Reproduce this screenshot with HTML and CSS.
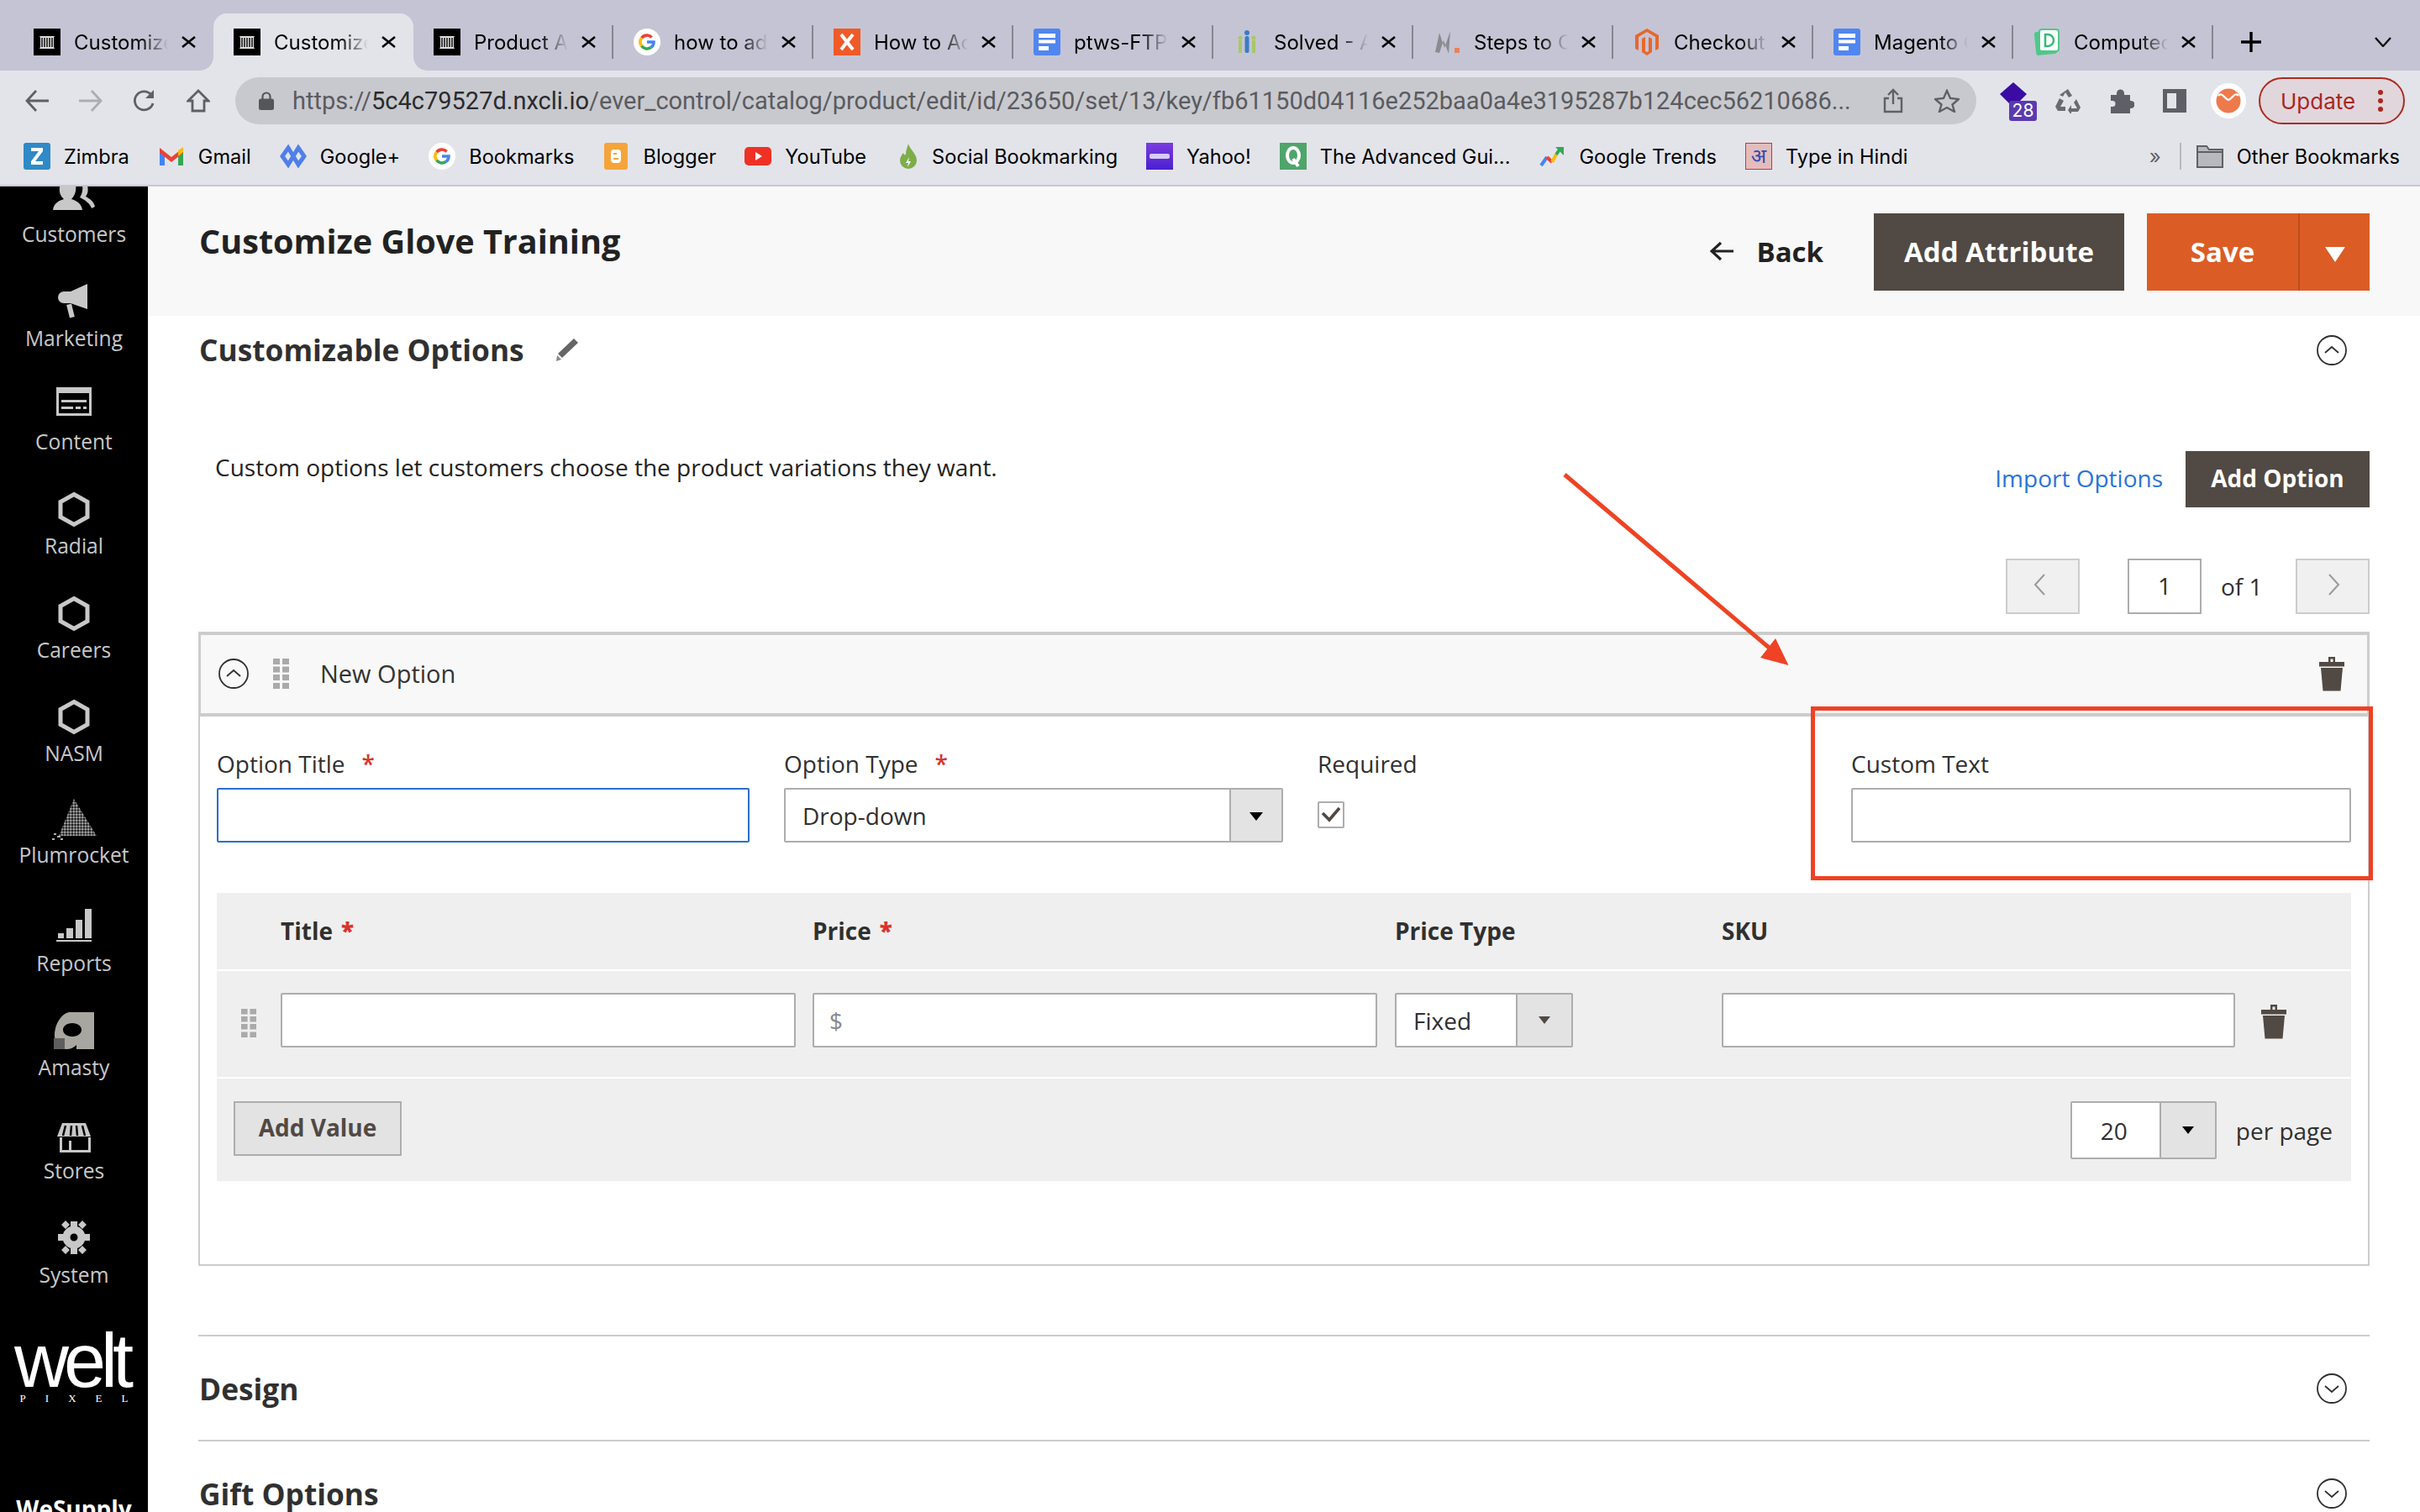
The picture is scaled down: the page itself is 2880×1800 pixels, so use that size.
FILE: index.html
```html
<!DOCTYPE html>
<html lang="en">
<head>
<meta charset="utf-8">
<title>Customize Glove Training</title>
<link rel="stylesheet" href="styles.css">
</head>
<body>
<svg class="defs" xmlns="http://www.w3.org/2000/svg">
  <symbol id="ev" viewBox="0 0 32 32"><rect width="32" height="32" fill="#000"/><path d="M7 9h18l-1 2v11l1 2H7l1-2V11z" fill="#ddd"/><path d="M10 11v11M13 11v11M16 11v11M19 11v11M22 11v11" stroke="#000" stroke-width="1.4"/></symbol>
  <symbol id="g" viewBox="0 0 32 32"><circle cx="16" cy="16" r="16" fill="#fff"/><g fill="none" stroke-width="3.6"><path d="M21.6 10.4A8 8 0 0 0 9.6 11.2" stroke="#ea4335"/><path d="M9.6 11.2A8 8 0 0 0 9.6 20.8" stroke="#fbbc05"/><path d="M9.6 20.8A8 8 0 0 0 20.6 22.6" stroke="#34a853"/><path d="M20.6 22.6A8 8 0 0 0 24 16H16" stroke="#4285f4"/></g></symbol>
  <symbol id="doc" viewBox="0 0 32 32"><rect width="32" height="32" rx="3" fill="#5086f0"/><path d="M6 6h20v5H6zM6 13.500h20v4H6zM6 21h12v5H6z" fill="#fff"/></symbol>
  <symbol id="x" viewBox="0 0 32 32"><rect width="32" height="32" fill="#f05a28"/><path d="M9 7l14 18M23 7L9 25" stroke="#fff" stroke-width="4"/></symbol>
  <symbol id="solved" viewBox="0 0 32 32"><circle cx="16" cy="5" r="3" fill="#3a7cc4"/><rect x="13.500" y="9" width="5" height="20" rx="2" fill="#3a7cc4"/><circle cx="8" cy="11" r="2.500" fill="#a8c868"/><rect x="6" y="14" width="4" height="15" fill="#a8c868"/><circle cx="24" cy="11" r="2.500" fill="#a8c868"/><rect x="22" y="14" width="4" height="15" fill="#a8c868"/></symbol>
  <symbol id="steps" viewBox="0 0 32 32"><path d="M2 28L7 5l6 18L20 3l-2 27-6-16-5 15z" fill="#8a8a92"/><rect x="25" y="23" width="6" height="6" fill="#e8825a"/></symbol>
  <symbol id="mag" viewBox="0 0 32 32"><path d="M16 0L30 8v16l-4 2V10L16 4 6 10v16l-4-2V8z" fill="#e8672b"/><path d="M14 10l-4 2v16l6 4 6-4V12l-4-2v17l-2 1-2-1z" fill="#e8672b"/></symbol>
  <symbol id="comp" viewBox="0 0 32 32"><rect x="2" y="3" width="25" height="28" rx="3" fill="#4fc88a" transform="rotate(-6 14 17)"/><rect x="7" y="1" width="23" height="26" rx="3" fill="#fff" stroke="#4fc88a" stroke-width="2"/><path d="M14 7h3a7 7 0 0 1 0 14h-3z" fill="none" stroke="#38b878" stroke-width="2.500"/></symbol>
  <symbol id="trash" viewBox="0 0 30 42"><path d="M11 1h8v6h-2.500V3.500h-3V7H11z" fill="#514943"/><rect x="0" y="7" width="30" height="5.500" fill="#514943"/><path d="M2 14h26l-2.500 27.500h-21z" fill="#514943"/></symbol>
  <symbol id="grip" viewBox="0 0 19 36"><path d="M0 0h8v7H0zM11 0h8v7h-8zM0 9.500h8v7H0zM11 9.500h8v7h-8zM0 19h8v7H0zM11 19h8v7h-8zM0 29h8v7H0zM11 29h8v7h-8z" fill="#aaa"/></symbol>
  <symbol id="up" viewBox="0 0 36 36"><circle cx="18" cy="18" r="17" fill="none" stroke="#303030" stroke-width="1.800"/><path d="M10 21l8-7 8 7" fill="none" stroke="#303030" stroke-width="1.800"/></symbol>
  <symbol id="down" viewBox="0 0 36 36"><circle cx="18" cy="18" r="17" fill="none" stroke="#303030" stroke-width="1.800"/><path d="M10 15l8 7 8-7" fill="none" stroke="#303030" stroke-width="1.800"/></symbol>
  <symbol id="hex" viewBox="0 0 60 60"><path d="M30 16.500l16 9v18l-16 9-16-9v-18z" fill="none" stroke="#c8c8c8" stroke-width="5"/></symbol>
  <symbol id="tabx" viewBox="0 0 17 14"><path d="M1 1l15 12M16 1L1 13" stroke="#000" stroke-width="2.600"/></symbol>
</svg>

<header class="chrome">
  <div class="tabstrip">
    <div class="tab"><svg class="fav"><use href="#ev"/></svg><span class="tab-title">Customize</span><svg class="tab-x"><use href="#tabx"/></svg></div>
    <div class="tab tab-active"><svg class="fav"><use href="#ev"/></svg><span class="tab-title">Customize</span><svg class="tab-x"><use href="#tabx"/></svg></div>
    <div class="tab"><svg class="fav"><use href="#ev"/></svg><span class="tab-title">Product A</span><svg class="tab-x"><use href="#tabx"/></svg><i class="tab-sep"></i></div>
    <div class="tab"><svg class="fav"><use href="#g"/></svg><span class="tab-title">how to ad</span><svg class="tab-x"><use href="#tabx"/></svg><i class="tab-sep"></i></div>
    <div class="tab"><svg class="fav"><use href="#x"/></svg><span class="tab-title">How to Ac</span><svg class="tab-x"><use href="#tabx"/></svg><i class="tab-sep"></i></div>
    <div class="tab"><svg class="fav"><use href="#doc"/></svg><span class="tab-title">ptws-FTP</span><svg class="tab-x"><use href="#tabx"/></svg><i class="tab-sep"></i></div>
    <div class="tab"><svg class="fav"><use href="#solved"/></svg><span class="tab-title">Solved - A</span><svg class="tab-x"><use href="#tabx"/></svg><i class="tab-sep"></i></div>
    <div class="tab"><svg class="fav"><use href="#steps"/></svg><span class="tab-title">Steps to C</span><svg class="tab-x"><use href="#tabx"/></svg><i class="tab-sep"></i></div>
    <div class="tab"><svg class="fav"><use href="#mag"/></svg><span class="tab-title">Checkout</span><svg class="tab-x"><use href="#tabx"/></svg><i class="tab-sep"></i></div>
    <div class="tab"><svg class="fav"><use href="#doc"/></svg><span class="tab-title">Magento C</span><svg class="tab-x"><use href="#tabx"/></svg><i class="tab-sep"></i></div>
    <div class="tab"><svg class="fav"><use href="#comp"/></svg><span class="tab-title">Computec</span><svg class="tab-x"><use href="#tabx"/></svg><i class="tab-sep"></i></div>
    <svg class="tab-new" viewBox="0 0 24 24"><path d="M12 0v24M0 12h24" stroke="#000" stroke-width="3.400"/></svg>
    <svg class="tab-menu" viewBox="0 0 20 12"><path d="M1 1l9 10 9-10" fill="none" stroke="#111" stroke-width="2.400"/></svg>
  </div>

  <div class="toolbar">
    <div class="nav-icons">
      <svg class="nav-icon" viewBox="0 0 28 28"><path d="M28 14H3M13 2L2 14l11 12" fill="none" stroke="#5f6067" stroke-width="2.800"/></svg>
      <svg class="nav-icon" viewBox="0 0 28 28"><path d="M0 14h25M15 2l11 12-11 12" fill="none" stroke="#acadb3" stroke-width="2.800"/></svg>
      <svg class="nav-icon" viewBox="0 0 28 28"><path d="M24 17a11 11 0 1 1-2-10" fill="none" stroke="#5f6067" stroke-width="2.800"/><path d="M25 1v10H15z" fill="#5f6067"/></svg>
      <svg class="nav-icon" viewBox="0 0 28 28"><path d="M14 2L2 14h5v12h14V14h5z" fill="none" stroke="#5f6067" stroke-width="2.800"/></svg>
    </div>
    <div class="urlbar">
      <svg class="lock" viewBox="0 0 18 22"><path d="M4.500 9V6a4.500 4.500 0 0 1 9 0v3" fill="none" stroke="#55565a" stroke-width="2.200"/><rect y="8.500" width="18" height="13.500" rx="2.500" fill="#55565a"/></svg>
      <span class="url">https://<b class="url-host">5c4c79527d.nxcli.io</b>/ever_control/catalog/product/edit/id/23650/set/13/key/fb61150d04116e252baa0a4e3195287b124cec56210686...</span>
      <svg class="share" viewBox="0 0 24 30"><path d="M12 19V2M6 8l6-6 6 6M7 12H2v16h20V12h-5" fill="none" stroke="#5f6067" stroke-width="2.400"/></svg>
      <svg class="star" viewBox="0 0 30 28"><path d="M15 2l4 9 10 1-7.500 6.500L24 27l-9-5-9 5 2.500-8.500L1 12l10-1z" fill="none" stroke="#5f6067" stroke-width="2.400"/></svg>
    </div>
    <div class="ext-badge">
      <svg class="ext-dia" viewBox="0 0 32 30"><path d="M16 0l16 14-16 16L0 14z" fill="#3a0ca3"/></svg>
      <span class="ext-count">28</span>
    </div>
    <svg class="tool tool-recycle" viewBox="0 0 30 30"><path d="M15 1l5 8-4 2-4-6-3 5-4-2zM25 13l5 10-3 5h-8v4l-4-6 4-6v4h7l-4-7zM5 12l-5 10 3 5h9v-5H6l4-7z" fill="#6a6b72"/></svg>
    <svg class="tool tool-puzzle" viewBox="0 0 30 30"><path d="M2 8h7V6a4.500 4.500 0 0 1 9 0v2h7v7h1a4.500 4.500 0 0 1 0 9h-1v6H2v-8h2a3.500 3.500 0 0 0 0-7H2z" fill="#5f6067"/></svg>
    <svg class="tool tool-panel" viewBox="0 0 28 28"><path d="M0 0h28v28H0z" fill="#5f6067"/><path d="M5 5h11v18H5z" fill="#e3e4ea"/></svg>
    <svg class="avatar" viewBox="0 0 42 42"><circle cx="21" cy="21" r="21" fill="#fff"/><circle cx="21" cy="21" r="14.500" fill="#ee7a4b"/><path d="M9 15c4-5 7 3 12 5 5-2 8-10 12-5" fill="none" stroke="#fff" stroke-width="2.200"/></svg>
    <div class="update"><span>Update</span><svg class="dots" viewBox="0 0 6 26"><circle cx="3" cy="3" r="3"/><circle cx="3" cy="13" r="3"/><circle cx="3" cy="23" r="3"/></svg></div>
  </div>

  <div class="bookmarks">
    <div class="bm"><svg class="fav" viewBox="0 0 32 32"><rect width="32" height="32" rx="3" fill="#2f8ac6"/><path d="M9 6h14v4L14 22h9v4H9v-4l9-12H9z" fill="#fff"/></svg><span>Zimbra</span></div>
    <div class="bm"><svg class="fav" viewBox="0 0 32 32"><path d="M2 6v21h6V13z" fill="#4285f4"/><path d="M30 6v21h-6V13z" fill="#34a853"/><path d="M2 6l14 11L30 6v6L16 23 2 12z" fill="#ea4335"/><path d="M24 9l6-4v6l-6 5z" fill="#fbbc05"/></svg><span>Gmail</span></div>
    <div class="bm"><svg class="fav" viewBox="0 0 32 32"><path d="M10 6l6 10-6 10-7-10zM22 6l7 10-7 10-6-10z" fill="none" stroke="#4f7fe8" stroke-width="5"/></svg><span>Google+</span></div>
    <div class="bm"><svg class="fav"><use href="#g"/></svg><span>Bookmarks</span></div>
    <div class="bm"><svg class="fav" viewBox="0 0 32 32"><rect x="2" width="28" height="32" rx="3" fill="#f5a43a"/><rect x="10" y="8" width="12" height="16" rx="4" fill="#fff"/><path d="M13 13h4M13 19h6" stroke="#f5a43a" stroke-width="2"/></svg><span>Blogger</span></div>
    <div class="bm"><svg class="fav" viewBox="0 0 32 32"><rect y="5" width="32" height="22" rx="5" fill="#ee3124"/><path d="M13 11l8 5-8 5z" fill="#fff"/></svg><span>YouTube</span></div>
    <div class="bm bm-social"><svg class="fav-flame" viewBox="0 0 24 32"><path d="M12 1c1 6 10 12 10 20a10 10 0 0 1-20 0c0-4 2-6 4-9 1 3 3 3 3 1 0-4 2-8 3-12z" fill="#7cae4a"/><path d="M13 17l-4 7h3l-1 5 4-7h-3z" fill="#fff"/></svg><span>Social Bookmarking</span></div>
    <div class="bm"><svg class="fav" viewBox="0 0 32 32"><defs><linearGradient id="yh" x1="0" y1="0" x2="0" y2="1"><stop offset="0" stop-color="#7a3de0"/><stop offset="1" stop-color="#4a20d0"/></linearGradient></defs><rect width="32" height="32" fill="url(#yh)"/><rect x="4" y="13" width="24" height="6" rx="2" fill="#d8ccf5"/></svg><span>Yahoo!</span></div>
    <div class="bm"><svg class="fav" viewBox="0 0 32 32"><rect width="32" height="32" fill="#4fa56a"/><ellipse cx="16" cy="15" rx="7" ry="9" fill="none" stroke="#fff" stroke-width="4"/><path d="M16 19l6 9" stroke="#fff" stroke-width="4"/></svg><span>The Advanced Gui...</span></div>
    <div class="bm"><svg class="fav" viewBox="0 0 32 32"><path d="M3 27l7-10" stroke="#4285f4" stroke-width="4"/><path d="M10 17l6 6" stroke="#ea4335" stroke-width="4"/><path d="M16 23l5-9" stroke="#fbbc05" stroke-width="4"/><path d="M21 14l4-6" stroke="#34a853" stroke-width="4"/><path d="M20 5h10v10z" fill="#34a853"/></svg><span>Google Trends</span></div>
    <div class="bm"><span class="hindi-ico">अ</span><span>Type in Hindi</span></div>
    <span class="bm-more">»</span>
    <i class="bm-sep"></i>
    <div class="bm bm-other"><svg class="fav" viewBox="0 0 32 32"><path d="M1 4h11l3 4h16v21H1z" fill="#b8b9be" stroke="#5f6067" stroke-width="2"/><path d="M1 11h30" stroke="#5f6067" stroke-width="2"/></svg><span>Other Bookmarks</span></div>
  </div>
</header>

<div class="app">
  <nav class="sidebar">
    <div class="nav-item"><svg class="nav-ico" viewBox="0 0 60 60"><path d="M5 49c1-9 8-11 13-13-6-5-6-12-4-18h18c1 6 0 13-5 18 6 2 12 5 13 13z" fill="#c8c8c8"/><path d="M40 20c1 6-1 11-3 14 6 3 12 7 14 13l4-2c-1-6-7-10-11-12 3-4 3-9 2-13z" fill="#c8c8c8"/></svg><span>Customers</span></div>
    <div class="nav-item"><svg class="nav-ico" viewBox="0 0 60 60"><path d="M46 18v30L26 41H18a6 6 0 0 1 0-14h8z" fill="#c8c8c8" transform="translate(0 -5)"/><rect x="23" y="37" width="6" height="16" fill="#c8c8c8" transform="rotate(-14 26 45)"/></svg><span>Marketing</span></div>
    <div class="nav-item"><svg class="nav-ico" viewBox="0 0 60 60"><path d="M9 13h42v34H9zM12 20v24h36V20z" fill="#c8c8c8" fill-rule="evenodd"/><path d="M15 28h30v3H15zM15 36h14v3H15zM32 36h6v3h-6zM41 36h4v3h-4z" fill="#c8c8c8"/></svg><span>Content</span></div>
    <div class="nav-item"><svg class="nav-ico"><use href="#hex"/></svg><span>Radial</span></div>
    <div class="nav-item"><svg class="nav-ico"><use href="#hex"/></svg><span>Careers</span></div>
    <div class="nav-item"><svg class="nav-ico"><use href="#hex"/></svg><span>NASM</span></div>
    <div class="nav-item nav-plum"><svg class="nav-ico" viewBox="0 0 60 60"><defs><pattern id="dots" width="3.500" height="3.500" patternUnits="userSpaceOnUse"><circle cx="1.750" cy="1.750" r="1.500" fill="#b0b0b0"/></pattern></defs><path d="M30 11L57 55H12z" fill="url(#dots)"/><path d="M4 59h3M10 56h4M14 59h3M6 53h3" stroke="#b0b0b0" stroke-width="2"/></svg><span>Plumrocket</span></div>
    <div class="nav-item nav-reports"><svg class="nav-ico" viewBox="0 0 60 60"><path d="M11 42h7v6h-7zM21 36h8v12h-8zM32 26h8v22h-8zM43 13h8v35h-8z" fill="#c8c8c8"/><rect x="9" y="50" width="42" height="2" fill="#c8c8c8"/></svg><span>Reports</span></div>
    <div class="nav-item"><svg class="nav-ico" viewBox="0 0 60 60"><path d="M25 12h29v44H33v-5c-3 3-7 5-12 5-10 0-14-8-14-16 0-18 12-28 18-28zm3 13c-7 0-11 4-11 8s4 8 11 8 11-4 11-8-4-8-11-8z" fill="#a8a6a0" fill-rule="evenodd"/><rect x="6" y="43" width="13" height="13" fill="#5e5e5e"/></svg><span>Amasty</span></div>
    <div class="nav-item"><svg class="nav-ico" viewBox="0 0 60 60"><path d="M16 21h28l6 16H10z" fill="#c8c8c8"/><path d="M20 24l-3 12M27 24l-1 12M33 24l1 12M40 24l3 12" stroke="#000" stroke-width="2.500"/><path d="M13 38h3v15h8V42h3v11h20V38h3v18H13z" fill="#c8c8c8"/></svg><span>Stores</span></div>
    <div class="nav-item"><svg class="nav-ico" viewBox="0 0 60 60"><circle cx="30" cy="33" r="9" fill="none" stroke="#c8c8c8" stroke-width="9"/><path d="M26 14h8v6h-8zM26 46h8v7h-8zM11 29h6v8h-6zM43 29h6v8h-6zM15 18l5-5 5 5-5 5zM35 48l5-5 5 5-5 5zM35 18l5-5 5 5-5 5zM15 48l5-5 5 5-5 5z" fill="#c8c8c8"/></svg><span>System</span></div>
    <div class="welt"><span class="welt-word">welt</span><span class="welt-pixel">PIXEL</span></div>
    <div class="wesupply">WeSupply</div>
  </nav>

  <main class="content">
    <div class="page-head">
      <h1 class="page-title">Customize Glove Training</h1>
      <div class="page-actions">
        <a class="back"><svg class="back-ico" viewBox="0 0 28 24"><path d="M28 12H3M13 2L2 12l11 10" fill="none" stroke="#222" stroke-width="3.200"/></svg>Back</a>
        <a class="btn-dark btn-attr">Add Attribute</a>
        <div class="btn-save"><span class="save-label">Save</span><span class="save-arrow"><i class="tri-white"></i></span></div>
      </div>
    </div>

    <section class="panel">
      <div class="panel-head">
        <h2 class="panel-title">Customizable Options</h2>
        <svg class="pencil" viewBox="0 0 28 28"><path d="M22 1l5 5L8 24l-5-5z" fill="#666"/><path d="M2 21l5 5-6 2z" fill="#888"/></svg>
        <svg class="circ circ-right"><use href="#up"/></svg>
      </div>
      <div class="intro-row">
        <p class="intro">Custom options let customers choose the product variations they want.</p>
        <div class="intro-actions"><a class="link">Import Options</a><a class="btn-dark btn-option">Add Option</a></div>
      </div>
      <div class="pager">
        <span class="page-btn page-prev"><svg viewBox="0 0 14 26"><path d="M13 1L2 13l11 12" fill="none" stroke="#999" stroke-width="2"/></svg></span>
        <span class="page-num">1</span>
        <span class="page-of">of 1</span>
        <span class="page-btn page-next"><svg viewBox="0 0 14 26"><path d="M1 1l11 12L1 25" fill="none" stroke="#999" stroke-width="2"/></svg></span>
      </div>

      <div class="option">
        <div class="option-head">
          <svg class="circ"><use href="#up"/></svg>
          <svg class="grip"><use href="#grip"/></svg>
          <span class="option-name">New Option</span>
          <svg class="trash trash-head"><use href="#trash"/></svg>
        </div>
        <div class="option-body">
          <div class="fields">
            <div class="field"><label class="flabel">Option Title<b class="req">*</b></label><input class="input input-focus" type="text"></div>
            <div class="field"><label class="flabel">Option Type<b class="req">*</b></label>
              <div class="select"><span class="select-val">Drop-down</span><span class="select-arrow select-arrow-main"><i class="tri tri-black tri-big"></i></span></div>
            </div>
            <div class="field"><label class="flabel">Required</label>
              <span class="checkbox"><svg viewBox="0 0 28 28"><path d="M4 12l8 8L24 6" fill="none" stroke="#514943" stroke-width="3.600"/></svg></span>
            </div>
            <div class="field"><label class="flabel">Custom Text</label><input class="input" type="text"></div>
          </div>

          <div class="vtable">
            <div class="vrow vrow-head">
              <span></span>
              <span class="th">Title<b class="req-t">*</b></span>
              <span class="th">Price<b class="req-t">*</b></span>
              <span class="th">Price Type</span>
              <span class="th">SKU</span>
              <span></span>
            </div>
            <div class="vrow vrow-body">
              <svg class="grip grip-row"><use href="#grip"/></svg>
              <input class="input w-title" type="text">
              <div class="price w-price"><span class="dollar">$</span></div>
              <div class="select w-type"><span class="select-val">Fixed</span><span class="select-arrow"><i class="tri tri-grey"></i></span></div>
              <input class="input w-sku" type="text">
              <svg class="trash trash-row"><use href="#trash"/></svg>
            </div>
            <div class="vfoot">
              <a class="btn-light">Add Value</a>
              <div class="perpage">
                <div class="select select-pp"><span class="select-val">20</span><span class="select-arrow"><i class="tri tri-black"></i></span></div>
                <span class="pp-text">per page</span>
              </div>
            </div>
          </div>
        </div>
      </div>

      <div class="accordions">
        <div class="acc"><h2 class="panel-title">Design</h2><svg class="circ"><use href="#down"/></svg></div>
        <div class="acc"><h2 class="panel-title">Gift Options</h2><svg class="circ"><use href="#down"/></svg></div>
      </div>
    </section>
  </main>
</div>

<div class="callout"></div>
<svg class="arrow-note" viewBox="0 0 2880 1800"><path d="M1862 565L2110 775" stroke="#ee4324" stroke-width="5" fill="none"/><path d="M2128.500 792L2095 783L2113 760z" fill="#ee4324"/></svg>
</body>
</html>
```
FILE: styles.css
```css
* { box-sizing: border-box; }
html, body { margin: 0; padding: 0; }
body { position: relative; width: 2880px; height: 1800px; overflow: hidden; background: #fff; font-family: "Open Sans", sans-serif; color: #303030; }
.defs { display: none; }

/* browser chrome */
.chrome { font-family: Inter, "Liberation Sans", sans-serif; color: #000; height: 222px; background: #e3e4ea; border-bottom: 2px solid #c8c8cf; }
.tabstrip { height: 84px; background: #c5c4d4; display: flex; padding: 16px 0 0 16px; }
.tab { position: relative; width: 238px; height: 68px; display: flex; align-items: center; padding-left: 24px; }
.tab-active { background: #e3e4ea; border-radius: 16px 16px 0 0; }
.tab-active::before, .tab-active::after { content: ""; position: absolute; bottom: 0; width: 16px; height: 16px; }
.tab-active::before { left: -16px; background: radial-gradient(circle at 0 0, #c5c4d4 15.5px, #e3e4ea 16px); }
.tab-active::after { right: -16px; background: radial-gradient(circle at 100% 0, #c5c4d4 15.5px, #e3e4ea 16px); }
.fav { width: 32px; height: 32px; flex: none; }
.fav-flame { width: 24px; height: 32px; flex: none; }
.tab-title { width: 112px; margin-left: 16px; font-size: 24px; white-space: nowrap; overflow: hidden; -webkit-mask-image: linear-gradient(90deg, #000 70%, transparent 100%); mask-image: linear-gradient(90deg, #000 70%, transparent 100%); }
.tab-x { width: 17px; height: 14px; margin-left: 16px; flex: none; }
.tab-sep { width: 2px; height: 40px; background: #86868f; margin-left: auto; }
.tab-new { width: 24px; height: 24px; margin: 22px 0 0 33px; }
.tab-menu { width: 20px; height: 12px; margin: 28px 0 0 135px; }

.toolbar { height: 76px; padding: 8px 0 12px 30px; display: flex; align-items: center; }
.nav-icons { display: flex; gap: 36px; margin-right: 30px; }
.nav-icon { width: 28px; height: 28px; }
.urlbar { width: 2072px; height: 56px; border-radius: 28px; background: #c8c9ce; display: flex; align-items: center; padding-left: 28px; }
.lock { width: 18px; height: 22px; flex: none; }
.url { margin-left: 22px; width: 1864px; font-family: Roboto, "Liberation Sans", sans-serif; font-size: 29px; white-space: nowrap; color: #5a5b60; flex: none; overflow: hidden; }
.url-host { font-weight: 400; color: #2a2b2f; }
.share { width: 24px; height: 30px; margin-left: 29px; flex: none; }
.star { width: 30px; height: 28px; margin-left: 37px; flex: none; }
.ext-badge { position: relative; width: 44px; height: 44px; margin-left: 28px; flex: none; }
.ext-dia { width: 32px; height: 30px; display: block; }
.ext-count { position: absolute; right: 0; bottom: -2px; width: 33px; height: 24px; border-radius: 3px; background: #5a3ab0; color: #fff; font-size: 21px; line-height: 24px; text-align: center; }
.tool { flex: none; }
.tool-recycle { width: 30px; height: 30px; margin-left: 22px; }
.tool-puzzle { width: 30px; height: 30px; margin-left: 34px; }
.tool-panel { width: 28px; height: 28px; margin-left: 34px; }
.avatar { width: 42px; height: 42px; margin-left: 29px; flex: none; }
.update { width: 174px; height: 56px; margin-left: 15px; border: 2px solid #ad2b1f; border-radius: 28px; background: #e2d6dd; color: #a8281e; font-size: 26px; display: flex; align-items: center; justify-content: space-between; padding: 0 24px 0 24px; flex: none; }
.dots { width: 6px; height: 26px; fill: #a8281e; }

.bookmarks { height: 60px; display: flex; align-items: center; gap: 34px; padding: 0 0 8px 28px; font-size: 23.600px; }
.bm { display: flex; align-items: center; gap: 16px; flex: none; white-space: nowrap; }
.bm-social { padding-left: 4px; }
.hindi-ico { width: 32px; height: 32px; background: #e4bcbc; border: 1px solid #c23b30; color: #2f4db0; font-family: "Noto Sans", "DejaVu Sans", sans-serif; font-size: 24px; line-height: 28px; text-align: center; }
.bm-more { margin-left: auto; color: #5f6067; font-size: 24px; }
.bm-sep { width: 2px; height: 32px; background: #b8b8bf; margin: 0 -16px 0 -12px; }
.bm-other { margin-right: 24px; }

/* layout */
.app { display: flex; height: 1578px; overflow: hidden; }
.sidebar { width: 176px; flex: none; background: #000; overflow: hidden; display: flex; flex-direction: column; align-items: center; }
.nav-item { flex: none; width: 100%; height: 123.700px; display: flex; flex-direction: column; align-items: center; color: #c8c8c8; font-size: 24.600px; line-height: 36px; }
.nav-item:first-child { margin-top: -21px; }
.nav-ico { width: 60px; height: 60px; flex: none; }
.nav-plum { margin-top: -3px; }
.nav-reports { margin-top: 5px; }
.welt { display: flex; flex-direction: column; align-items: center; color: #fff; margin-top: 18px; width: 100%; }
.welt-word { font-family: "Liberation Sans", sans-serif; font-size: 90px; line-height: 76px; height: 76px; letter-spacing: -6px; padding-right: 6px; }
.welt-pixel { font-family: "Liberation Serif", serif; font-size: 13px; letter-spacing: 23px; line-height: 14px; padding-left: 23px; }
.wesupply { color: #fff; font-weight: 700; font-size: 28px; line-height: 40px; margin-top: 104px; white-space: nowrap; }

.content { flex: 1; min-width: 0; }
.page-head { height: 154px; background: #f8f8f8; display: flex; justify-content: space-between; padding: 32px 60px 0 61px; }
.page-title { margin: 0; font-size: 39.600px; line-height: 66px; font-weight: 700; color: #222; }
.page-actions { display: flex; align-items: center; height: 92px; }
.back { display: flex; align-items: center; font-size: 33px; font-weight: 700; color: #222; margin-right: 60px; padding-bottom: 2px; }
.back-ico { width: 28px; height: 24px; margin-right: 27px; }
.btn-dark { background: #514943; color: #fff; font-weight: 700; display: flex; align-items: center; justify-content: center; padding-bottom: 2px; }
.btn-attr { width: 298px; height: 92px; font-size: 33px; margin-right: 27px; }
.btn-save { width: 265px; height: 92px; background: #dc5c25; color: #fff; font-size: 33px; font-weight: 700; display: flex; }
.save-label { width: 182px; display: flex; align-items: center; justify-content: center; border-right: 2px solid #bd4d1c; padding-bottom: 2px; }
.save-arrow { flex: 1; display: flex; align-items: center; justify-content: center; }
.tri-white { width: 0; height: 0; border-left: 12px solid transparent; border-right: 12px solid transparent; border-top: 18px solid #fff; margin-top: 5px; }

.panel { padding: 0 60px; }
.panel-head { height: 80px; display: flex; align-items: center; padding-left: 1px; }
.panel-title { margin: 0; font-size: 35.300px; line-height: 50px; font-weight: 700; color: #303030; }
.pencil { width: 28px; height: 28px; margin-left: 37px; }
.circ { width: 36px; height: 36px; flex: none; display: block; }
.circ-right { margin-left: auto; margin-right: 27px; margin-top: 2px; }
.intro-row { margin-top: 81px; height: 67px; display: flex; justify-content: space-between; }
.intro { margin: 0; padding-left: 20px; font-size: 28px; line-height: 38px; color: #222; }
.intro-actions { display: flex; align-items: center; }
.link { color: #2a74d4; font-size: 28px; margin-right: 27px; padding-bottom: 4px; }
.btn-option { width: 219px; height: 67px; font-size: 28px; padding-bottom: 4px; }
.pager { margin-top: 61px; height: 66px; display: flex; justify-content: flex-end; align-items: center; font-size: 28px; color: #303030; }
.page-btn { width: 88px; height: 66px; background: #f0f0f0; border: 2px solid #ccc; display: flex; align-items: center; justify-content: center; padding-bottom: 4px; }
.page-prev { padding-right: 8px; }
.page-next { padding-left: 4px; }
.page-btn svg { width: 14px; height: 26px; }
.page-num { width: 88px; height: 66px; border: 2px solid #adadad; margin-left: 57px; display: flex; align-items: center; justify-content: center; padding-bottom: 2px; }
.page-of { width: 112px; padding-left: 23px; }

.option { margin-top: 21px; height: 755px; }
.option-head { height: 101px; background: #f8f8f8; border: solid #ccc; border-width: 4px 3px; display: flex; align-items: center; padding: 0 0 2px 21px; }
.grip { width: 19px; height: 36px; margin-left: 29px; flex: none; }
.option-name { margin-left: 37px; font-size: 29px; color: #333; }
.trash { width: 30px; height: 42px; flex: none; }
.trash-head { margin-left: auto; margin-right: 27px; }
.option-body { height: 654px; border: solid #ccc; border-width: 0 2px 2px; padding: 36px 20px 0 20px; }
.fields { display: grid; grid-template-columns: 634px 594px 594px 595px; column-gap: 41px; }
.field { min-width: 0; }
.flabel { display: block; font-size: 28px; line-height: 40px; height: 40px; margin-bottom: 9px; color: #303030; }
.req { color: #d9342b; font-weight: 600; margin-left: 20px; }
.input { display: block; width: 100%; height: 65px; border: 2px solid #adadad; border-radius: 2px; background: #fff; outline: none; padding: 0; margin: 0; }
.input-focus { border-color: #2a6fcb; }
.select { height: 65px; border: 2px solid #adadad; border-radius: 2px; background: #fff; display: flex; font-size: 28px; color: #303030; }
.select-val { flex: 1; padding-left: 20px; display: flex; align-items: center; }
.select-arrow { width: 66px; background: #e3e3e3; border-left: 2px solid #adadad; display: flex; align-items: center; justify-content: center; }
.select-arrow-main { width: 62px; }
.tri { width: 0; height: 0; border-left: 7px solid transparent; border-right: 7px solid transparent; border-top: 9px solid #303030; }
.tri-big { border-left-width: 8px; border-right-width: 8px; border-top-width: 10px; margin-top: 2px; }
.tri-grey { border-top-color: #514943; }
.tri-black { border-top-color: #000; }
.checkbox { display: block; width: 32px; height: 32px; border: 2px solid #adadad; border-radius: 2px; background: #fff; margin-top: 25px; }
.checkbox svg { display: block; width: 28px; height: 28px; }

.vtable { margin-top: 60px; display: flex; flex-direction: column; gap: 2px; }
.vrow { display: grid; grid-template-columns: 76px 633px 693px 389px 642px 1fr; background: #efefef; align-items: center; }
.vrow-head { height: 91px; }
.vrow-body { height: 126px; align-items: start; padding-top: 26px; }
.th { font-size: 28px; font-weight: 700; color: #303030; padding-bottom: 2px; }
.req-t { color: #d9342b; margin-left: 10px; }
.grip-row { width: 18px; margin: 18px 0 0 29px; }
.trash-row { margin-top: 13px; }
.w-title { width: 613px; }
.w-price { width: 672px; }
.w-type { width: 212px; }
.w-sku { width: 611px; }
.price { height: 65px; border: 2px solid #adadad; border-radius: 2px; background: #fff; display: flex; align-items: center; padding-left: 18px; }
.dollar { color: #8a8a8a; font-size: 28px; }
.vfoot { height: 122px; background: #efefef; display: flex; justify-content: space-between; align-items: flex-start; padding: 27px 22px 0 20px; }
.btn-light { width: 200px; height: 65px; background: #e3e3e3; border: 2px solid #adadad; color: #514943; font-size: 28px; font-weight: 700; display: flex; align-items: center; justify-content: center; padding-bottom: 3px; }
.perpage { display: flex; align-items: center; }
.select-pp { width: 174px; height: 69px; }
.select-pp .select-val { padding-left: 34px; }
.pp-text { margin-left: 23px; font-size: 28px; color: #303030; }

.accordions { margin-top: 82px; }
.acc { height: 125px; border-top: 2px solid #ccc; display: flex; align-items: center; justify-content: space-between; padding: 0 27px 0 1px; }

/* annotation laid over the screenshot */
.callout { position: absolute; left: 2155px; top: 841px; width: 669px; height: 207px; border: 5px solid #ef4123; pointer-events: none; }
.arrow-note { position: absolute; left: 0; top: 0; width: 2880px; height: 1800px; pointer-events: none; }
```
